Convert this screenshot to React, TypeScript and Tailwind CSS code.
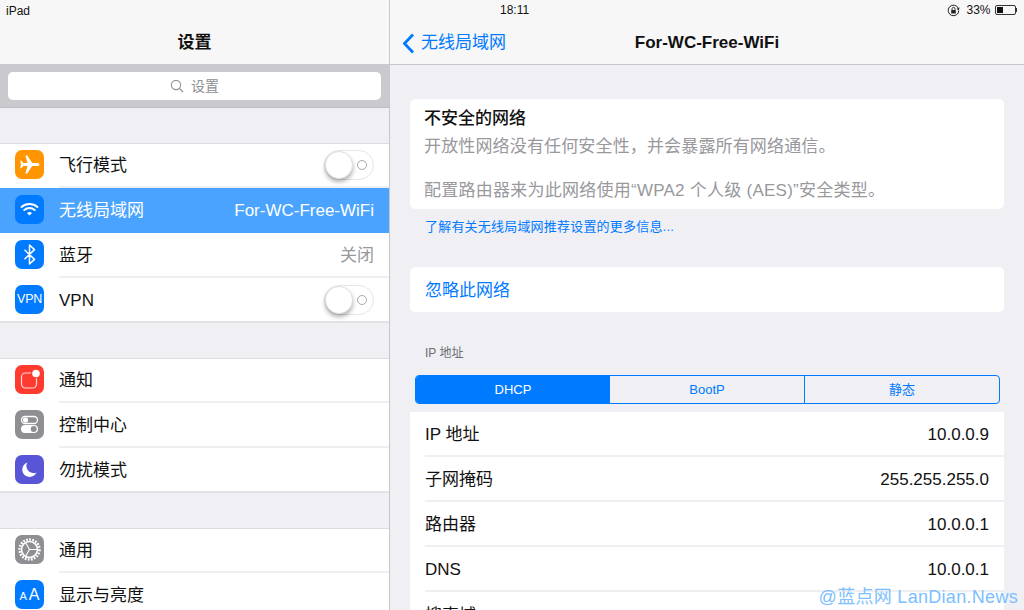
import React from "react";

const font = { fontFamily: '"Liberation Sans", "Noto Sans CJK SC", sans-serif' };

function Tile({ bg, children, first }: { bg: string; children: React.ReactNode; first?: boolean }) {
  return (
    <div className={`w-[29px] h-[29px] rounded-[7px] shrink-0 self-start flex items-center justify-center text-white ${first ? "mt-[6px]" : "mt-[7px]"} ${bg}`}>
      {children}
    </div>
  );
}

const Svg = ({ children }: { children: React.ReactNode }) => (
  <svg width="29" height="29" viewBox="0 0 29 29" fill="none">{children}</svg>
);

const Plane = () => (
  <Svg>
    <path fill="#fff" d="M24.5 14.5c0-1-1.3-1.6-2.7-1.6h-4.6L12.3 5.6h-1.9l2.2 7.3H8.2L6.5 10.8H5.2l.8 3.7-.8 3.7h1.3l1.7-2.1h4.4l-2.2 7.3h1.9l4.9-7.3h4.6c1.4 0 2.7-.6 2.7-1.6z" />
  </Svg>
);
const Wifi = () => (
  <Svg>
    <path d="M6.5 11.9c4.6-4 11.4-4 16 0" stroke="#fff" strokeWidth="2" strokeLinecap="round" />
    <path d="M9.3 15c3-2.6 7.4-2.6 10.4 0" stroke="#fff" strokeWidth="2" strokeLinecap="round" />
    <path d="M12 18c1.5-1.2 3.5-1.2 5 0l-2.5 2.6z" fill="#fff" />
  </Svg>
);
const Bt = () => (
  <Svg>
    <path d="M9.5 9.8l10 9.6-5 4.6V5l5 4.6-10 9.6" stroke="#fff" strokeWidth="1.5" strokeLinejoin="round" />
  </Svg>
);
const Bell = () => (
  <Svg>
    <rect x="6.5" y="8" width="15" height="15" rx="4" stroke="#fff" strokeOpacity="0.8" strokeWidth="1.2" />
    <circle cx="21" cy="8.5" r="5" fill="#ff3b30" />
    <circle cx="21" cy="8.5" r="3.8" fill="#fff" />
  </Svg>
);
const Ctrl = () => (
  <Svg>
    <rect x="6.5" y="6.5" width="16" height="7" rx="3.5" stroke="#fff" strokeWidth="1.3" />
    <circle cx="10.5" cy="10" r="2.6" fill="#fff" />
    <rect x="6" y="15" width="17" height="8" rx="4" fill="#fff" />
    <circle cx="18.7" cy="19" r="3" fill="#8e8e93" />
  </Svg>
);
const Moon = () => (
  <Svg>
    <path fill="#fff" d="M12.5 7.5c-3.2 1-5.2 3.8-5.2 7 0 4.1 3.3 7.4 7.4 7.4 3 0 5.6-1.7 6.8-4.4-1 .5-2.1.7-3.2.6-3.9-.2-6.9-3.4-6.9-7.3 0-1.3.4-2.5 1.1-3.3z" />
  </Svg>
);
const Gear = () => (
  <Svg>
    <circle cx="14.5" cy="14.5" r="10" stroke="#fff" strokeWidth="2.4" strokeDasharray="1.8 1.3" />
    <circle cx="14.5" cy="14.5" r="8" stroke="#fff" strokeWidth="1.6" />
    <path d="M14.5 14.5H22M14.5 14.5L10.8 8M14.5 14.5L10.8 21" stroke="#fff" strokeWidth="1.1" />
  </Svg>
);

function Toggle() {
  return (
    <div className="relative w-[50px] h-[30px] rounded-full border border-[#e5e5ea] bg-white shrink-0">
      <div className="absolute right-[6px] top-[9px] w-[10px] h-[10px] rounded-full border border-[#a8a8ad]" />
      <div className="absolute left-0 top-0 w-[28px] h-[28px] rounded-full bg-white border border-[#e0e0e0] shadow-[0_3px_4px_rgba(0,0,0,0.3)]" />
    </div>
  );
}

function Row({ icon, label, value, toggle, active, first, last }: {
  icon: React.ReactNode; label: string; value?: string; toggle?: boolean; active?: boolean; first?: boolean; last?: boolean;
}) {
  const shift = active ? "" : "pt-[2px]";
  return (
    <div className={`h-[45px] box-border flex items-center pl-[15px] ${active ? "bg-[#4aa3ff]" : "bg-white"} ${first ? "border-t border-[#dcdce0]" : ""} ${last ? "border-b-2 border-[#e2e2e6]" : ""}`}>
      {icon}
      <div className={`flex-1 ml-[15px] h-full flex items-center justify-between pr-[15px] box-border ${last || active ? "" : "border-b-2 border-[#efeff1]"}`}>
        <span className={`text-[17px] ${shift} ${active ? "text-white" : "text-[#111]"}`}>{label}</span>
        {toggle ? <Toggle /> : value ? <span className={`text-[17px] ${shift} ${active ? "text-white" : "text-[#98989d]"}`}>{value}</span> : null}
      </div>
    </div>
  );
}

function Info({ label, value, last }: { label: string; value: string; last?: boolean }) {
  return (
    <div className="h-[45px] pl-[15px] shrink-0">
      <div className={`h-full box-border flex items-center justify-between pr-[15px] text-[17px] text-[#111] ${last ? "" : "border-b-2 border-[#efeff1]"}`}>
        <span className="pt-[3px]">{label}</span>
        <span className="pt-[3px]">{value}</span>
      </div>
    </div>
  );
}

export default function App() {
  return (
    <div style={font} className="relative w-[1024px] h-[610px] overflow-hidden flex bg-[#efeff4]">
      {/* left pane */}
      <div className="w-[390px] shrink-0 h-full border-r border-[#c8c7cc] overflow-hidden box-border">
        <div className="h-[64px] bg-[#f7f7f8]">
          <div className="h-[20px] pl-[6px] pt-[1px] flex items-center text-[12px] text-[#111]">iPad</div>
          <div className="h-[44px] pt-[2px] flex items-center justify-center text-[17px] font-semibold text-[#111]">设置</div>
        </div>
        <div className="h-[44px] box-border bg-[#c9c9ce] px-[8px] pt-[8px] border-b border-[#bdbdc2]">
          <div className="h-[28px] rounded-[5px] bg-white flex items-center justify-center gap-[7px] text-[14px] text-[#8e8e93]">
            <svg width="14" height="14" viewBox="0 0 14 14" fill="none">
              <circle cx="6" cy="6" r="4.6" stroke="#8e8e93" strokeWidth="1.1" />
              <path d="M9.4 9.4L13 13" stroke="#8e8e93" strokeWidth="1.2" />
            </svg>
            <span>设置</span>
          </div>
        </div>
        <div className="mt-[35px]">
          <Row first icon={<Tile first bg="bg-[#ff9500]"><Plane /></Tile>} label="飞行模式" toggle />
          <Row active icon={<Tile bg="bg-[#007aff]"><Wifi /></Tile>} label="无线局域网" value="For-WC-Free-WiFi" />
          <Row icon={<Tile bg="bg-[#007aff]"><Bt /></Tile>} label="蓝牙" value="关闭" />
          <Row last icon={<Tile bg="bg-[#007aff]"><span className="text-[12.5px] tracking-[-0.3px]">VPN</span></Tile>} label="VPN" toggle />
        </div>
        <div className="mt-[35px]">
          <Row first icon={<Tile first bg="bg-[#ff3b30]"><Bell /></Tile>} label="通知" />
          <Row icon={<Tile bg="bg-[#8e8e93]"><Ctrl /></Tile>} label="控制中心" />
          <Row last icon={<Tile bg="bg-[#5856d6]"><Moon /></Tile>} label="勿扰模式" />
        </div>
        <div className="mt-[35px]">
          <Row first icon={<Tile first bg="bg-[#8e8e93]"><Gear /></Tile>} label="通用" />
          <Row icon={<Tile bg="bg-[#007aff]"><span className="flex items-baseline gap-[2px] leading-none"><span className="text-[11px]">A</span><span className="text-[16px]">A</span></span></Tile>} label="显示与亮度" />
        </div>
      </div>

      {/* right pane */}
      <div className="flex-1 h-full overflow-hidden">
        <div className="h-[65px] box-border bg-[#f7f7f8] border-b border-[#c8c7cc]">
          <div className="h-[20px] flex items-center pl-[110px] pr-[7px] text-[12px] text-[#111]">
            <span>18:11</span>
            <svg className="ml-auto" width="13" height="13" viewBox="0 0 13 13" fill="none">
              <path d="M11.3 4.2A5.3 5.3 0 1 0 11.8 6.5" stroke="#222" strokeWidth="1" />
              <path d="M12.6 3.6L11.6 6.4 9.6 4.8z" fill="#222" />
              <rect x="4.2" y="6" width="4.6" height="3.6" rx="0.6" fill="#222" />
              <path d="M5 6V4.9a1.5 1.5 0 0 1 3 0V6" stroke="#222" strokeWidth="0.9" />
            </svg>
            <span className="ml-[6px]">33%</span>
            <div className="ml-[4px] flex items-center">
              <div className="w-[21px] h-[10px] box-border rounded-[2px] border border-[#333] p-[1px]">
                <div className="w-[6px] h-full bg-[#111]" />
              </div>
              <div className="w-[1.5px] h-[4px] bg-[#333]" />
            </div>
          </div>
          <div className="relative h-[44px] pt-[2px] box-border flex items-center justify-center text-[17px] font-semibold text-[#111]">
            <div className="absolute left-[12px] top-[4px] flex items-center gap-[6px] text-[#007aff] font-normal text-[17px] h-[38px]">
              <svg width="13" height="21" viewBox="0 0 13 21" fill="none">
                <path d="M11 1.5L2.5 10.5l8.5 9" stroke="#007aff" strokeWidth="2.8" />
              </svg>
              <span>无线局域网</span>
            </div>
            <span>For-WC-Free-WiFi</span>
          </div>
        </div>

        <div className="ml-[20px] mr-[20px] flex flex-col">
          <div className="mt-[34px] h-[110px] box-border rounded-[5px] bg-white pl-[14px] pt-[6px]">
            <div className="h-[28px] flex items-center text-[17px] font-medium text-[#111]">不安全的网络</div>
            <div className="h-[28px] flex items-center text-[17px] tracking-[0.15px] text-[#98989d]">开放性网络没有任何安全性，并会暴露所有网络通信。</div>
            <div className="mt-[16px] h-[28px] flex items-center text-[17px] tracking-[0.25px] text-[#98989d]">配置路由器来为此网络使用“WPA2 个人级 (AES)”安全类型。</div>
          </div>
          <div className="h-[58px] pt-[9px] pl-[15px] text-[13px] leading-[18px] tracking-[0.2px] text-[#007aff]">了解有关无线局域网推荐设置的更多信息...</div>
          <div className="h-[45px] pt-[2px] box-border rounded-[5px] bg-white pl-[15px] flex items-center text-[17px] text-[#007aff]">忽略此网络</div>
          <div className="mt-[33px] h-[16px] pl-[15px] text-[12px] leading-[16px] text-[#6d6d72]">IP 地址</div>
          <div className="mt-[14px] ml-[5px] mr-[4px] h-[29px] box-border flex rounded-[4px] border border-[#007aff] text-[13px] text-[#007aff] overflow-hidden">
            <div className="flex-1 bg-[#007aff] text-white flex items-center justify-center">DHCP</div>
            <div className="flex-1 border-r border-[#007aff] flex items-center justify-center">BootP</div>
            <div className="flex-1 flex items-center justify-center">静态</div>
          </div>
          <div className="mt-[8px] bg-white flex flex-col">
            <Info label="IP 地址" value="10.0.0.9" />
            <Info label="子网掩码" value="255.255.255.0" />
            <Info label="路由器" value="10.0.0.1" />
            <Info label="DNS" value="10.0.0.1" />
            <Info label="搜索域" value="" last />
          </div>
        </div>
      </div>

      {/* watermark */}
      <div className="absolute right-[6px] bottom-[2px] text-[18px] leading-[22px] text-[#7cc0ff] whitespace-nowrap tracking-[0.3px]">
        @蓝点网 LanDian.News
      </div>
    </div>
  );
}
